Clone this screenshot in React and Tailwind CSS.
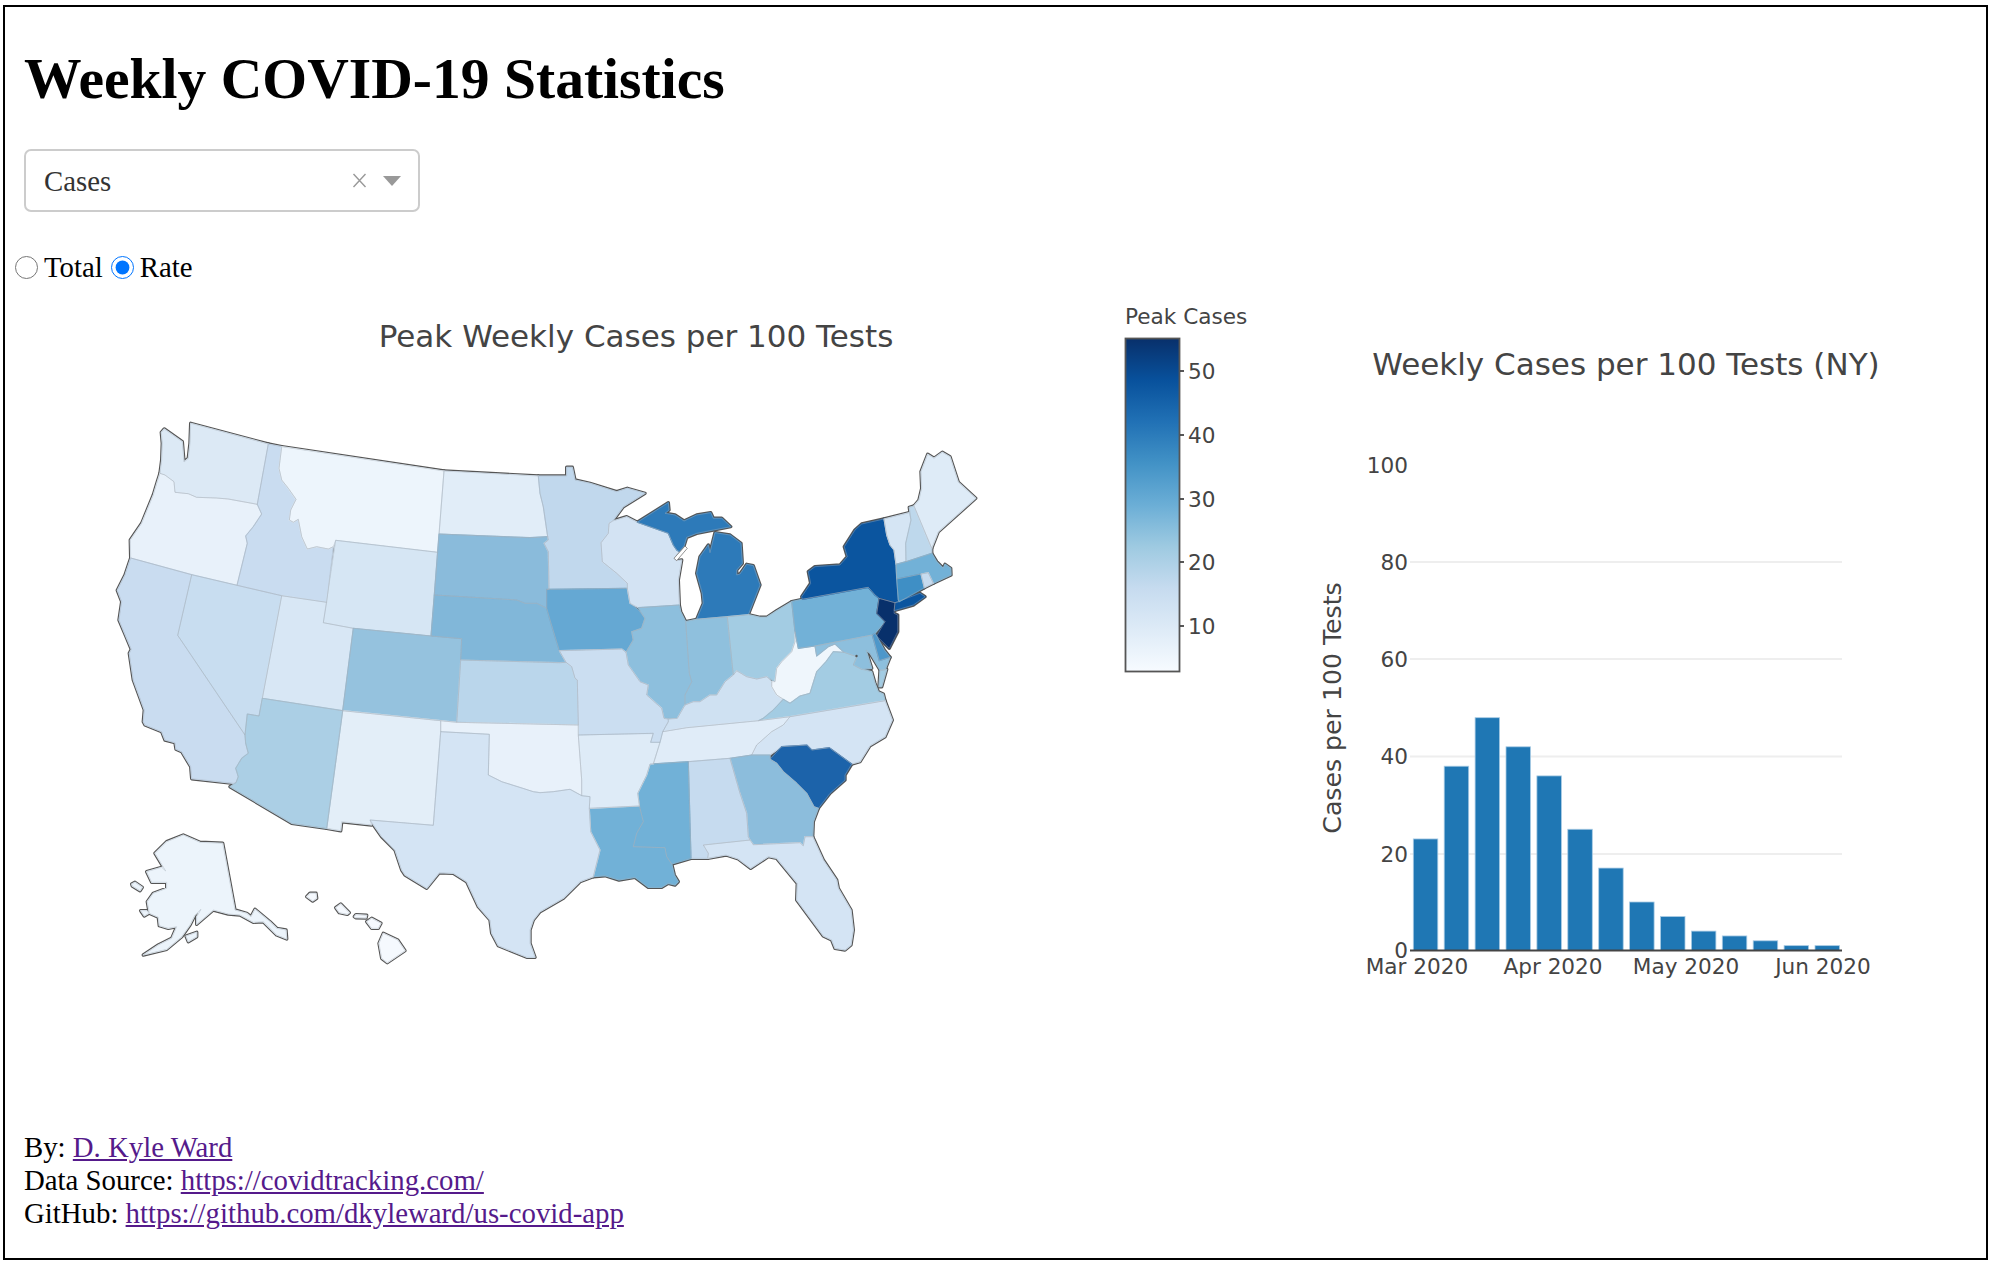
const origins = { A: [100, 400], B: [100, 680], C: [540, 420], D: [540, 680] }

// outlines were traced from crops, each letter switches to the origin of one crop
function toPoints(trace) {
  let origin = origins.A
  const out = []
  for (const token of trace.trim().split(/\s+/)) {
    if (origins[token]) {
      origin = origins[token]
      continue
    }
    const [x, y] = token.split(',').map(Number)
    out.push(`${(origin[0] + x / 3).toFixed(1)},${(origin[1] + y / 3).toFixed(1)}`)
  }
  return out.join(' ')
}

const states = [
  ['#dce9f5', 'A 272,70 505,132 472,313 385,297 350,294 290,292 265,281 225,277 222,245 195,225 180,220 185,180 187,130 184,97 193,87 247,125 252,186 265,175 270,130'],
  ['#e8f1fa', 'A 180,220 195,225 222,245 225,277 265,281 290,292 350,294 385,297 472,313 485,342 460,380 437,408 442,430 411,556 275,524 92,474 91,420 125,370 160,285 172,245'],
  ['#c9dcf0', 'A 92,474 275,524 233,706 B 435,165 437,190 445,220 425,235 407,265 415,290 408,308 400,310 275,296 272,260 245,215 228,208 225,188 195,180 185,155 135,135 130,125 133,90 100,0 A 88,760 94,748 78,710 57,660 65,605 52,571 75,525'],
  ['#c8ddf0', 'A 275,524 411,556 545,587 B 487,55 477,108 442,102 435,165 A 233,706'],
  ['#c9dcf0', 'A 505,132 545,140 537,205 545,240 565,265 588,298 572,330 568,360 580,367 595,358 605,410 622,447 650,440 685,447 700,440 680,607 545,587 411,556 442,430 437,408 460,380 485,342 472,313'],
  ['#edf5fc', 'A 545,140 1032,213 1013,457 707,421 700,440 685,447 650,440 622,447 605,410 595,358 580,367 568,360 572,330 588,298 565,265 545,240 537,205'],
  ['#d6e6f4', 'A 707,421 1013,457 993,708 760,685 670,668'],
  ['#d8e7f5', 'A 545,587 680,607 670,668 760,685 B 728,92 487,55'],
  ['#95c2de', 'A 760,685 993,708 1085,716 1082,780 B 1070,127 1022,122 728,92'],
  ['#e1edf8', 'A 1032,213 1315,228 1320,280 1330,320 1343,410 1290,413 1017,402'],
  ['#8abbdb', 'A 1017,402 1290,413 1343,410 1345,420 1332,430 1345,455 1347,568 1340,568 1340,625 1310,610 1275,610 1250,600 1003,585'],
  ['#81b7d9', 'A 1003,585 1250,600 1275,610 1310,610 1340,625 1350,660 C 58,692 78,727 60,728 A 1082,780 1085,716 993,708'],
  ['#bad6eb', 'A 1082,780 C 60,728 78,727 95,740 105,775 112,780 D 115,135 B 1070,127'],
  ['#c1d8ed', 'A 1315,228 C 0,168 80,168 80,142 97,142 105,180 150,190 230,215 262,205 315,220 250,260 218,303 207,310 205,340 183,368 187,425 230,460 262,490 262,505 20,508 A 1347,568 1345,455 1332,430 1345,420 1343,410 1330,320 1320,280'],
  ['#65a8d3', 'C 20,508 262,505 270,550 295,570 315,595 305,625 275,635 280,660 258,697 245,687 58,692 30,600 20,565'],
  ['#d3e3f3', 'C 207,310 218,303 260,290 292,307 385,340 400,375 410,390 418,395 402,415 410,422 425,420 415,480 418,555 295,563 270,550 262,505 262,490 230,460 187,425 183,368 205,340'],
  ['#2d7ab9', 'C 292,307 385,248 387,270 375,280 405,285 432,303 470,285 512,278 520,295 545,295 572,320 520,330 470,340 440,352 432,378 418,395 410,390 400,375 385,340'],
  ['#2d7ab9', 'C 525,338 570,345 603,370 607,430 590,450 590,465 600,462 620,433 640,437 660,495 625,584 562,590 470,598 490,550 487,520 470,460 480,410 505,375 510,398'],
  ['#8dbfdd', 'C 295,563 418,555 422,575 437,605 448,760 455,785 435,825 435,855 412,895 385,895 372,895 365,865 320,825 325,795 300,785 265,735 258,697 280,660 275,635 305,625 315,595'],
  ['#8fc0dd', 'C 437,605 470,598 562,590 580,765 555,785 530,825 510,825 480,845 460,845 435,855 435,825 455,785 448,760'],
  ['#a3cce3', 'C 562,590 625,584 660,592 680,592 710,572 755,545 765,635 765,665 755,695 725,725 710,745 705,785 680,770 650,777 620,770 590,752 580,765'],
  ['#cfe1f2', 'C 435,855 460,845 480,845 510,825 530,825 555,785 580,765 590,752 620,770 650,777 680,770 695,785 695,800 710,825 730,838 700,870 670,895 D 655,122 440,143 368,155 385,125 385,118 C 412,895'],
  ['#eff6fc', 'C 765,635 775,685 825,678 830,708 865,680 885,672 912,697 880,695 858,725 830,755 810,820 780,828 750,850 730,838 710,825 695,800 695,785 705,785 710,745 725,725 755,695 765,665'],
  ['#72b1d7', 'C 755,545 787,538 985,502 1005,525 1017,535 1010,580 1035,605 1005,640 997,645 825,678 775,685 765,635'],
  ['#0b559f', 'C 787,538 785,530 812,490 805,455 825,440 900,435 922,410 913,380 945,330 965,312 1032,297 1040,345 1050,375 1062,390 1068,433 1070,477 1075,540 1078,545 1065,548 1017,535 1005,525 985,502'],
  ['#0b559f', 'C 1065,548 1140,520 1155,530 1120,555 1062,572'],
  ['#08306b', 'C 1017,535 1065,548 1062,580 1073,585 1073,635 1048,685 1010,648 1035,605 1010,580 1015,550'],
  ['#8dbfdd', 'C 825,678 997,645 1018,722 1050,712 1035,750 1020,750 990,700 978,690 995,745 965,748 940,735 950,710 912,697 885,672 865,680 830,708'],
  ['#4d97ca', 'C 997,645 1005,640 1033,690 1050,712 1018,722'],
  ['#a3cce3', 'C 830,755 858,725 880,695 912,697 950,710 940,735 965,748 995,755 1005,790 1015,815 1030,822 1035,842 D 750,110 655,122 C 670,895 700,870 730,838 750,850 780,828 810,820'],
  ['#a3cce3', 'C 1040,748 1025,800 1017,800 1020,752'],
  ['#d4e4f4', 'D 1035,62 1057,120 1035,170 990,197 960,245 935,252 868,203 815,210 800,195 725,200 690,225 635,225 650,195 695,155 730,135 750,110'],
  ['#e0ecf8', 'D 368,155 440,143 655,122 750,110 730,135 695,155 650,195 635,225 570,235 445,245 340,252 360,187'],
  ['#1c63aa', 'D 690,238 725,200 800,195 815,210 868,203 935,252 915,285 915,300 870,340 835,385 822,380 800,340 770,310 730,275 710,250'],
  ['#8cbddc', 'D 570,235 635,225 690,225 690,238 710,250 730,275 770,310 800,340 822,380 835,385 820,425 818,470 795,470 790,497 780,488 640,494 625,470 620,400 600,340'],
  ['#c6dbef', 'D 445,245 570,235 600,340 620,400 625,470 630,480 490,495 505,520 503,535 453,535'],
  ['#d4e4f4', 'D 490,495 630,480 640,494 780,488 790,497 795,470 818,470 850,540 890,600 895,625 933,690 940,750 933,795 915,810 885,805 875,780 850,768 770,660 772,610 710,535 685,530 632,565 595,537 558,525 503,535 505,520'],
  ['#71b1d7', 'D 330,252 445,245 453,535 395,552 380,530 375,503 280,500 290,460 310,425 300,385 293,340 320,285'],
  ['#71b1d7', 'D 148,385 298,378 300,385 310,425 290,460 280,500 375,503 380,530 395,552 403,585 415,605 405,615 385,610 365,622 325,622 285,592 237,600 195,587 160,590 180,510 152,455'],
  ['#deebf7', 'D 115,165 340,160 332,187 360,187 340,252 330,252 320,285 293,340 298,378 148,385 150,350 125,347 125,300'],
  ['#cbdef1', 'C 58,692 245,687 258,697 265,735 300,785 325,795 320,825 365,865 372,895 D 385,118 385,125 368,155 360,187 332,187 340,160 115,165 115,135 C 112,780 105,775 95,740 78,727'],
  ['#e8f1fa', 'B 1022,122 1070,127 D 115,135 115,165 125,300 125,347 90,328 40,335 0,338 B 1300,335 1268,325 1205,305 1165,285 1168,163 1022,155'],
  ['#e3eef8', 'B 728,92 1022,122 1022,155 1000,436 810,420 815,435 725,425 722,452 680,445'],
  ['#d4e4f4', 'B 1022,155 1168,163 1165,285 1205,305 1268,325 1300,335 D 0,338 40,335 90,328 125,347 150,350 148,385 152,455 180,510 160,590 120,605 70,655 0,695 B 1300,720 1290,750 1290,790 1305,832 1280,832 1195,797 1175,760 1170,720 1135,680 1100,605 1060,580 1018,578 980,625 915,585 905,570 885,510 845,470 810,420 1000,436'],
  ['#abcfe5', 'B 487,55 728,92 680,445 575,430 390,320 408,308 415,290 407,265 425,235 445,220 437,190 435,165 442,102 477,108'],
  ['#d5e5f4', 'C 1032,297 1108,278 1113,300 1097,370 1098,425 1068,433 1062,390 1050,375 1040,345'],
  ['#bed8ec', 'C 1108,262 1122,258 1175,385 1175,400 1098,425 1097,370 1113,300'],
  ['#deebf7', 'C 1122,258 1137,240 1145,205 1143,155 1163,103 1182,115 1207,97 1230,110 1255,187 1307,235 1195,335 1175,385'],
  ['#72b1d7', 'C 1068,433 1098,425 1175,400 1190,425 1210,445 1215,433 1232,445 1233,465 1180,490 1165,458 1143,462 1070,477'],
  ['#3f8fc5', 'C 1070,477 1143,462 1153,503 1078,545 1075,540'],
  ['#c6dbef', 'C 1143,462 1165,458 1180,490 1153,503'],
  ['#ecf4fb', 'B 368,490 405,690 440,700 453,710 465,688 510,725 530,745 558,750 560,777 530,765 490,725 460,727 420,705 385,702 340,690 290,733 290,710 303,688 285,705 270,735 245,770 200,808 130,825 175,795 215,775 230,740 205,745 178,737 175,712 148,700 142,665 160,640 200,625 200,607 155,607 140,575 185,562 197,573 165,520 200,485 250,465 300,487'],
  ['#ecf4fb', 'B 95,612 105,607 127,622 120,632 97,618'],
  ['#ecf4fb', 'B 122,692 140,692 147,700 133,708'],
  ['#ecf4fb', 'B 258,768 290,757 290,770 265,785'],
  ['#f5f9fe', 'B 620,650 630,640 648,640 650,655 638,663'],
  ['#f5f9fe', 'B 707,683 722,672 748,698 742,703 718,698'],
  ['#f5f9fe', 'B 763,710 768,704 800,706 798,714 767,713'],
  ['#f5f9fe', 'B 800,725 815,715 843,730 835,745 815,745'],
  ['#f5f9fe', 'B 850,760 893,780 915,812 862,848 845,835 837,790'],
].map(([fill, trace]) => ({ fill, points: toPoints(trace) }))

const blues = [
  ['0%', '#08306b'],
  ['12.5%', '#08519c'],
  ['25%', '#2171b5'],
  ['37.5%', '#4292c6'],
  ['50%', '#6baed6'],
  ['62.5%', '#9ecae1'],
  ['75%', '#c6dbef'],
  ['87.5%', '#deebf7'],
  ['100%', '#f7fbff'],
]

const legendTicks = [
  [50, 371],
  [40, 435],
  [30, 499],
  [20, 562],
  [10, 626],
]

function MapChart() {
  return (
    <svg width="1285" height="820" viewBox="5 285 1285 820" className="shrink-0 font-['DejaVu_Sans',sans-serif]">
      <defs>
        <linearGradient id="blues" x1="0" y1="0" x2="0" y2="1">
          {blues.map(([offset, color]) => <stop key={offset} offset={offset} stopColor={color} />)}
        </linearGradient>
      </defs>
      <text x="636" y="347" textAnchor="middle" fontSize="31" fill="#444">Peak Weekly Cases per 100 Tests</text>

      {/* dark layer shows only along the coast, the fill's own stroke closes gaps between neighbours */}
      {states.map((s, i) => <polygon key={i} points={s.points} fill="#555" stroke="#555" strokeWidth="3.4" strokeLinejoin="round" />)}
      {states.map((s, i) => <polygon key={i} points={s.points} fill={s.fill} stroke={s.fill} strokeWidth="1.2" strokeLinejoin="round" />)}
      {states.map((s, i) => <polygon key={i} points={s.points} fill="none" stroke="#a7b1ba" strokeWidth="0.4" strokeLinejoin="round" />)}
      <polygon points={toPoints('C 402,415 435,378 442,385 410,422')} fill="#fff" stroke="#777" strokeWidth="0.8" />
      <circle cx="856.5" cy="656" r="1.2" fill="#555" />

      <text x="1125" y="324" fontSize="21.6" fill="#444">Peak Cases</text>
      <rect x="1125.5" y="338.5" width="54" height="333" fill="url(#blues)" stroke="#555" strokeWidth="1.8" />
      {legendTicks.map(([label, y]) => (
        <g key={label}>
          <line x1="1180" x2="1184" y1={y} y2={y} stroke="#444" strokeWidth="1.8" />
          <text x="1188" y={y + 7.5} fontSize="21.6" fill="#444">{label}</text>
        </g>
      ))}
    </svg>
  )
}

const weekly = [23, 38, 48, 42, 36, 25, 17, 10, 7, 4, 3, 2, 1, 1]
const yTicks = [
  [100, 465.5],
  [80, 562],
  [60, 659],
  [40, 756.5],
  [20, 854],
  [0, 950],
]
const months = [
  ['Mar 2020', 1417],
  ['Apr 2020', 1553],
  ['May 2020', 1686],
  ['Jun 2020', 1823],
]

function BarChart() {
  return (
    <svg width="695" height="820" viewBox="1290 285 695 820" className="shrink-0 font-['DejaVu_Sans',sans-serif]">
      <text x="1626" y="375" textAnchor="middle" fontSize="31" fill="#444">Weekly Cases per 100 Tests (NY)</text>
      <text transform="translate(1341 708) rotate(-90)" textAnchor="middle" fontSize="25.2" fill="#444">Cases per 100 Tests</text>

      {yTicks.map(([label, y]) => (
        <g key={label}>
          {label > 0 && label < 100 && <line x1="1410" x2="1842" y1={y} y2={y} stroke="#eee" strokeWidth="1.8" />}
          <text x="1408" y={y + 7.5} textAnchor="end" fontSize="21.6" fill="#444">{label}</text>
        </g>
      ))}

      {weekly.map((value, i) => (
        <rect
          key={i}
          x={1413.3 + i * 30.9}
          y={950.5 - value * 4.85}
          width="24.5"
          height={value * 4.85}
          fill="#1f77b4"
          stroke="#a9cbe4"
          strokeWidth="0.8"
        />
      ))}
      <line x1="1410" x2="1842" y1="950.5" y2="950.5" stroke="#444" strokeWidth="1.8" />

      {months.map(([label, x]) => (
        <text key={label} x={x} y="974" textAnchor="middle" fontSize="21.6" fill="#444">{label}</text>
      ))}
    </svg>
  )
}

function Dropdown() {
  return (
    <div className="ml-[19px] mt-[38px] flex h-[63px] w-[396px] items-center rounded-[7px] border-2 border-[#ccc] pl-[18px] pr-[17px] text-[#333]">
      <span className="flex-1 pt-px">Cases</span>
      <svg width="15" height="15" viewBox="0 0 15 15" className="mr-[16px]">
        <path d="M1.5 1 L13.5 14 M13.5 1 L1.5 14" stroke="#999" strokeWidth="1.4" fill="none" />
      </svg>
      <svg width="18" height="10" viewBox="0 0 18 10">
        <polygon points="0,0 18,0 9,10" fill="#999" />
      </svg>
    </div>
  )
}

export default function App() {
  return (
    <div className="ml-[3px] mt-[5px] h-[1255px] w-[1985px] border-2 border-black bg-white font-['Liberation_Serif',serif] text-[28.8px] leading-[33px] text-black">
      <h1 className="ml-[19px] pt-10 text-[57.6px] font-bold leading-[64px]">Weekly COVID-19 Statistics</h1>
      <Dropdown />
      <div className="mb-px ml-[10px] mt-[39px] flex items-center">
        <input type="radio" name="kind" readOnly className="h-[23px] w-[23px] accent-[#0075ff]" />
        <span className="ml-[6px]">Total</span>
        <input type="radio" name="kind" checked readOnly className="ml-2 h-[23px] w-[23px] accent-[#0075ff]" />
        <span className="ml-[6px]">Rate</span>
      </div>
      <div className="flex">
        <MapChart />
        <BarChart />
      </div>
      <div className="ml-[19px] mt-[26px]">
        <div>By: <a href="#" className="text-[#551a8b] underline">D. Kyle Ward</a></div>
        <div>Data Source: <a href="#" className="text-[#551a8b] underline">https://covidtracking.com/</a></div>
        <div>GitHub: <a href="#" className="text-[#551a8b] underline">https://github.com/dkyleward/us-covid-app</a></div>
      </div>
    </div>
  )
}
